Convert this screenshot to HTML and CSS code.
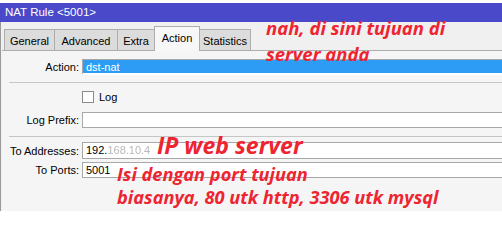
FILE: index.html
```html
<!DOCTYPE html>
<html>
<head>
<meta charset="utf-8">
<link rel="stylesheet" href="styles.css">
</head>
<body>
<div class="window">
  <div class="titlebar">NAT Rule &lt;5001&gt;</div>
  <div class="frame">
    <div class="tabs">
      <div class="tab">General</div>
      <div class="tab tab-adv">Advanced</div>
      <div class="tab tab-extra">Extra</div>
      <div class="tab tab-active">Action</div>
      <div class="tab tab-stats">Statistics</div>
    </div>
    <div class="panel">
      <div class="row row-action">
        <label class="lbl">Action:</label>
        <div class="field field-selected">dst-nat</div>
      </div>
      <div class="sep"></div>
      <div class="row row-check">
        <span class="lbl"></span>
        <div class="check"><span class="box"></span><span>Log</span></div>
      </div>
      <div class="row row-prefix">
        <label class="lbl">Log Prefix:</label>
        <div class="field"></div>
      </div>
      <div class="sep sep2"></div>
      <div class="row row-addr">
        <label class="lbl">To Addresses:</label>
        <div class="field">192.<span class="blur">168.10.4</span></div>
      </div>
      <div class="row row-ports">
        <label class="lbl">To Ports:</label>
        <div class="field">5001</div>
      </div>
    </div>
  </div>
</div>
<div class="note note-top">nah, di sini tujuan di<br>server anda</div>
<div class="note note-ip">IP web server</div>
<div class="note note-port">Isi dengan port tujuan<br>biasanya, 80 utk http, 3306 utk mysql</div>
</body>
</html>
```
FILE: styles.css
```css
html, body {
  margin: 0;
  padding: 0;
  background: #ffffff;
  width: 502px;
  height: 211px;
  overflow: hidden;
  position: relative;
  font-family: "Liberation Sans", Arial, sans-serif;
  font-size: 11px;
  color: #000;
}
.window {
  margin-top: 3px;
  height: 208px;
  display: flex;
  flex-direction: column;
}
.titlebar {
  height: 19px;
  background: #4949c9;
  color: #fff;
  font-size: 11.5px;
  line-height: 19px;
  padding-left: 5px;
}
.frame {
  flex: 1;
  background: #f0f0f0;
  border-left: 1px solid #9a9a9a;
  display: flex;
  flex-direction: column;
}
.tabs {
  height: 28px;
  display: flex;
  align-items: flex-end;
  padding-left: 3px;
  box-sizing: border-box;
}
.tab {
  height: 21px;
  width: 50px;
  box-sizing: border-box;
  background: #dcdcdc;
  border: 1px solid #adadad;
  border-bottom: none;
  border-right: none;
  display: flex;
  align-items: center;
  justify-content: center;
  padding-top: 1px;
}
.tab-adv { width: 63px; }
.tab-extra { width: 37px; }
.tab-stats { width: 51px; border-right: 1px solid #adadad; }
.tab-active {
  width: 46px;
  height: 25px;
  background: #f7f7f7;
  border: 1px solid #adadad;
  border-bottom: none;
  padding-bottom: 4px;
  position: relative;
  margin-bottom: -1px;
  z-index: 1;
}
.tab-active + .tab { border-left: none; }
.panel {
  flex: 1;
  background: #f5f5f5;
  border-top: 1px solid #adadad;
  margin-left: 1px;
  display: flex;
  flex-direction: column;
}
.row {
  display: grid;
  grid-template-columns: 77px 1fr;
  column-gap: 3px;
  align-items: center;
}
.lbl {
  text-align: right;
}
.field {
  height: 16px;
  box-sizing: border-box;
  background: #fff;
  border: 1px solid #a8a8a8;
  border-right: none;
  padding-left: 3px;
  line-height: 14px;
  white-space: nowrap;
}
.field-selected {
  background: #2c9cf5;
  color: #fff;
  border-bottom: 2px solid #fff;
}
.row-action { margin-top: 8px; }
.sep {
  height: 1px;
  background: #c6c6c6;
  margin-left: 7px;
  margin-top: 7px;
}
.row-check { margin-top: 8px; height: 12px; }
.check {
  display: flex;
  align-items: center;
  gap: 5px;
  height: 12px;
}
.box {
  width: 10px;
  height: 10px;
  border: 1px solid #8a8a8a;
  background: #fff;
}
.row-prefix { margin-top: 9px; }
.sep2 { margin-top: 8px; }
.row-addr { margin-top: 5px; }
.row-addr .field { height: 17px; line-height: 15px; }
.row-ports { margin-top: 3px; }
.blur {
  color: #b8b8b8;
  filter: blur(0.7px);
}
.note {
  position: absolute;
  color: #ee2431;
  font-family: "Open Sans", sans-serif;
  font-weight: 700;
  font-style: italic;
  white-space: nowrap;
}
.note-top {
  left: 266px;
  top: 15px;
  font-size: 18.5px;
  line-height: 26px;
}
.note-ip {
  left: 157px;
  top: 130px;
  font-size: 23px;
  line-height: 31px;
}
.note-port {
  left: 117px;
  top: 163px;
  font-size: 18.2px;
  line-height: 23px;
}
```
